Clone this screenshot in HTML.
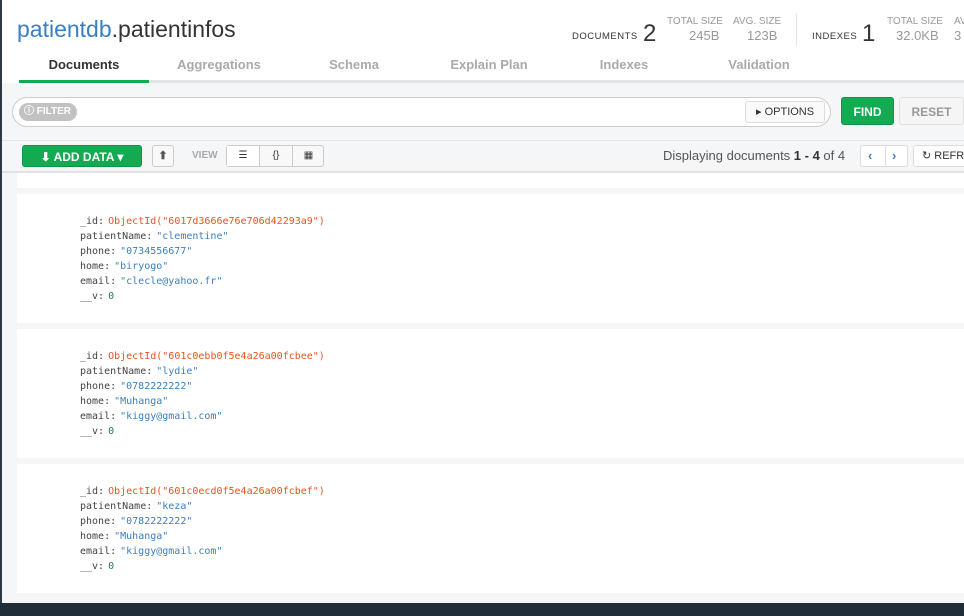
<!DOCTYPE html>
<html><head><style>
*{margin:0;padding:0;box-sizing:border-box}
body{width:964px;height:616px;overflow:hidden;background:#f5f6f7;font-family:"Liberation Sans",sans-serif;position:relative}
.ls{position:absolute;left:0;top:0;width:2px;height:616px;background:#2d3a42}
.top{position:absolute;left:2px;top:0;width:962px;height:83px;background:#fff}
.title{position:absolute;left:17px;top:16px;font-size:23px;color:#333}
.title span{color:#3b7fc0}
.tabs{position:absolute;left:17px;top:57px;height:26px;width:947px;border-bottom:3px solid #e4e4e4}
.tab{position:absolute;top:0;font-size:13px;font-weight:bold;color:#aaa;text-align:center;width:130px;height:26px;line-height:16px}
.tab.act{color:#333;border-bottom:3px solid #13aa52;height:26px}
.st{position:absolute;font-size:10px;color:#999}
.lab{position:absolute;font-size:9.5px;color:#333;letter-spacing:.5px}
.num{position:absolute;font-size:24px;color:#333}
.filter{position:absolute;left:12px;top:97px;width:819px;height:30px;border:1px solid #ccc;border-radius:15px;background:#fff}
.fpill{position:absolute;left:6px;top:5px;width:58px;height:18px;border-radius:9px;background:#c2c2c2;color:#fff;font-size:10px;font-weight:bold;line-height:18px;padding-left:5px}
.opt{position:absolute;left:732px;top:3px;width:80px;height:22px;border:1px solid #ddd;border-radius:3px;background:#fafafa;font-size:11px;color:#333;line-height:20px;padding-left:10px}
.btn{position:absolute;border-radius:3px;font-size:12px;font-weight:bold;text-align:center}
.sep{position:absolute;left:2px;top:140px;width:962px;height:1px;background:#e6e6e6}
.card{position:absolute;left:17px;width:947px;background:#fff}
.doc{position:absolute;left:63px;top:20px;font-family:"DejaVu Sans Mono","Liberation Mono",monospace;font-size:10px;line-height:15px;color:#444}
.doc i{font-style:normal;display:inline-block;width:4px}
.o{color:#e8531b}.s{color:#3b7fc0}.n{color:#2f7a4b}
.bot{position:absolute;left:0;top:603px;width:964px;height:13px;background:#1f2e38}
</style></head><body>
<div class="ls"></div>
<div class="top">
<div class="title" style="left:15px"><span>patientdb</span>.patientinfos</div>
<div class="lab" style="left:570px;top:31px">DOCUMENTS</div><div class="num" style="left:641px;top:20px">2</div>
<div class="st" style="left:665px;top:16px">TOTAL SIZE</div><div class="st" style="left:687px;top:28px;font-size:13px">245B</div>
<div class="st" style="left:731px;top:16px">AVG. SIZE</div><div class="st" style="left:745px;top:28px;font-size:13px">123B</div>
<div style="position:absolute;left:794px;top:14px;width:1px;height:32px;background:#e4e4e4"></div>
<div class="lab" style="left:810px;top:31px">INDEXES</div><div class="num" style="left:860px;top:20px">1</div>
<div class="st" style="left:885px;top:16px">TOTAL SIZE</div><div class="st" style="left:894px;top:28px;font-size:13px">32.0KB</div>
<div class="st" style="left:952px;top:16px">AV</div><div class="st" style="left:952px;top:28px;font-size:13px">3</div>
<div class="tabs">
<div class="tab act" style="left:0">Documents</div>
<div class="tab" style="left:135px">Aggregations</div>
<div class="tab" style="left:270px">Schema</div>
<div class="tab" style="left:405px">Explain Plan</div>
<div class="tab" style="left:540px">Indexes</div>
<div class="tab" style="left:675px">Validation</div>
</div>
</div>
<div class="filter"><div class="fpill">ⓘ FILTER</div><div class="opt">▸ OPTIONS</div></div>
<div class="btn" style="left:841px;top:97px;width:53px;height:28px;background:#13aa52;color:#fff;line-height:28px;border:1px solid #0f9346">FIND</div>
<div class="btn" style="left:899px;top:97px;width:65px;height:28px;background:#f5f5f5;color:#999;line-height:28px;border:1px solid #e0e0e0">RESET</div>
<div class="sep"></div>
<div class="btn" style="left:22px;top:145px;width:120px;height:22px;background:#13aa52;color:#fff;line-height:22px;border:1px solid #0f9346">⬇ ADD DATA ▾</div>
<div class="btn" style="left:152px;top:145px;width:22px;height:22px;border:1px solid #ccc;background:#f8f8f8;color:#555;line-height:20px;font-size:11px">⬆</div>
<div style="position:absolute;left:192px;top:150px;font-size:10px;font-weight:bold;color:#aaa">VIEW</div>
<div style="position:absolute;left:226px;top:145px;width:98px;height:22px;border:1px solid #ccc;border-radius:3px;background:#f8f8f8;font-size:10px;color:#333">
<div style="position:absolute;left:0;top:0;width:33px;height:20px;background:#fff;border-right:1px solid #ccc;text-align:center;line-height:20px">☰</div>
<div style="position:absolute;left:33px;top:0;width:33px;height:20px;border-right:1px solid #ccc;text-align:center;line-height:20px">{}</div>
<div style="position:absolute;left:66px;top:0;width:31px;height:20px;text-align:center;line-height:20px">▦</div></div>
<div style="position:absolute;left:663px;top:148px;font-size:13px;color:#555">Displaying documents <b style="color:#333">1 - 4</b> of 4</div>
<div style="position:absolute;left:860px;top:145px;width:48px;height:22px;border:1px solid #ddd;border-radius:3px;background:#fff;color:#3b7fc0;font-size:13px;font-weight:bold;line-height:20px"><span style="position:absolute;left:7px">‹</span><span style="position:absolute;left:24px;top:0;width:1px;height:20px;background:#ddd"></span><span style="position:absolute;left:31px">›</span></div>
<div style="position:absolute;left:913px;top:145px;width:60px;height:22px;border:1px solid #ddd;border-radius:3px;background:#fff;font-size:11px;color:#333;line-height:20px;padding-left:8px">↻ REFR</div>
<div style="position:absolute;left:2px;top:171px;width:962px;height:2px;background:#e2e2e2"></div>
<div class="card" style="top:173px;height:15px"></div>
<div class="card" style="top:194px;height:129px"><div class="doc">
_id:<i></i><span class="o">ObjectId("6017d3666e76e706d42293a9")</span><br>patientName:<i></i><span class="s">"clementine"</span><br>phone:<i></i><span class="s">"0734556677"</span><br>home:<i></i><span class="s">"biryogo"</span><br>email:<i></i><span class="s">"clecle@yahoo.fr"</span><br>__v:<i></i><span class="n">0</span></div></div>
<div class="card" style="top:329px;height:129px"><div class="doc">
_id:<i></i><span class="o">ObjectId("601c0ebb0f5e4a26a00fcbee")</span><br>patientName:<i></i><span class="s">"lydie"</span><br>phone:<i></i><span class="s">"0782222222"</span><br>home:<i></i><span class="s">"Muhanga"</span><br>email:<i></i><span class="s">"kiggy@gmail.com"</span><br>__v:<i></i><span class="n">0</span></div></div>
<div class="card" style="top:464px;height:129px"><div class="doc">
_id:<i></i><span class="o">ObjectId("601c0ecd0f5e4a26a00fcbef")</span><br>patientName:<i></i><span class="s">"keza"</span><br>phone:<i></i><span class="s">"0782222222"</span><br>home:<i></i><span class="s">"Muhanga"</span><br>email:<i></i><span class="s">"kiggy@gmail.com"</span><br>__v:<i></i><span class="n">0</span></div></div>
<div class="bot"></div>
</body></html>
